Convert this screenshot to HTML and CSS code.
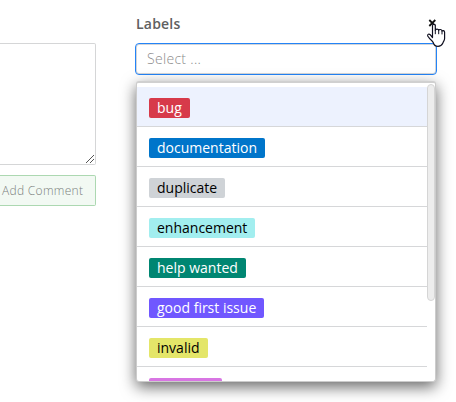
FILE: index.html
```html
<!DOCTYPE html>
<html lang="en">
<head>
<meta charset="utf-8">
<title>Labels</title>
<link rel="stylesheet" href="styles.css">
</head>
<body>
<main class="page">
  <section class="comment">
    <div class="comment-box">
      <svg class="grip" width="8" height="8" viewBox="0 0 8 8" shape-rendering="crispEdges"><path d="M0 7h1v1H0zM1 6h1v1H1zM2 5h1v1H2zM3 4h1v1H3zM4 3h1v1H4zM5 2h1v1H5zM6 1h1v1H6zM7 0h1v1H7zM4 7h1v1H4zM5 6h1v1H5zM6 5h1v1H6zM7 4h1v1H7z" fill="#555"/></svg>
    </div>
    <button class="add">Add Comment</button>
  </section>
  <aside class="labels">
    <header class="head">
      <h2>Labels</h2>
      <svg class="close" width="8" height="8" viewBox="0 0 8 8"><path d="M1.300 1L7.300 7M7.300 1L1.300 7" stroke="#111" stroke-width="1.8"/></svg>
    </header>
    <div class="select">Select ...</div>
    <div class="menu">
      <ul class="list">
        <li class="active"><span class="tag bug">bug</span></li>
        <li><span class="tag documentation">documentation</span></li>
        <li><span class="tag duplicate">duplicate</span></li>
        <li><span class="tag enhancement">enhancement</span></li>
        <li><span class="tag help">help wanted</span></li>
        <li><span class="tag first">good first issue</span></li>
        <li><span class="tag invalid">invalid</span></li>
        <li><span class="tag question">question</span></li>
      </ul>
      <div class="track"><div class="thumb"></div></div>
    </div>
  </aside>
</main>
<svg class="pointer" width="20" height="25" viewBox="0 0 20 25"><path d="M6.500 14.500V2.800C6.500 .8 9.300 .8 9.300 2.800V7.500C9.300 5.800 12.700 5.600 12.700 7.400C13 6 16 6.200 16 8.200C16.500 7 18.600 7.500 18.600 9.300V15.500C18.600 17.800 17 18.500 16.800 20.300C15.800 22.400 14.200 23.300 12 23.300C9.200 23.300 7.700 21.400 7.200 19.500C6.300 17.300 4.600 17 3.500 15.300L1.700 13C1.200 11.200 3 10.700 4.200 11.700Z" fill="#fff" stroke="#101020" stroke-width="1.2" stroke-linejoin="round"/><path d="M9.300 7.500v3.700M12.700 7.400v3.800M16 8.200v3.200" stroke="#101020"/></svg>
</body>
</html>
```
FILE: styles.css
```css
* { box-sizing: border-box; }
body {
  margin: 0;
  background: #fff;
  font: 14px/20px "Open Sans", sans-serif;
  overflow: hidden;
}
.page {
  display: grid;
  grid-template-columns: 96px 302px;
  column-gap: 39px;
  height: 402px;
}
.comment { padding-top: 43px; }
.comment-box {
  display: flex;
  align-items: flex-end;
  justify-content: flex-end;
  height: 122px;
  padding: 1px;
  border: 1px solid #d5d6d7;
  border-left: 0;
  border-radius: 0 2px 2px 0;
}
.add {
  display: block;
  width: 96px;
  height: 31px;
  margin-top: 10px;
  padding: 0 0 0 2px;
  border: 1px solid #acd8b1;
  border-left: 0;
  border-radius: 0 2px 2px 0;
  background: #f2f9f3;
  color: #7c817e;
  font: 300 12px/20px "Open Sans", sans-serif;
  letter-spacing: .3px;
  text-align: left;
  white-space: nowrap;
}
.labels { padding-top: 14px; }
.head {
  display: flex;
  justify-content: space-between;
  height: 29px;
  padding-left: 1px;
}
h2 {
  margin: 0;
  color: #606060;
  font-size: 14px;
  font-weight: 600;
  letter-spacing: .2px;
  line-height: 20px;
}
.close { margin: 5px 1px 0 0; }
.select {
  height: 32px;
  padding: 5px 11px;
  border: 1px solid #2484f7;
  border-radius: 4px;
  box-shadow: inset 0 0 0 1px #d3d5d8;
  color: #8c8c8c;
  font-weight: 300;
  letter-spacing: .3px;
}
.menu {
  display: flex;
  height: 301px;
  margin: 6px 1px 0;
  padding-top: 1px;
  overflow: hidden;
  border: 1px solid #ccc;
  border-top: 2px solid #d0d0d0;
  border-radius: 3px;
  background: #fff;
  box-shadow: 0 5px 15px rgba(0, 0, 0, .6);
}
.list {
  width: 290px;
  margin: 0;
  padding: 3px 0 0;
  list-style: none;
}
.list li {
  height: 40px;
  padding: 11px 12px 0;
  border-bottom: 1px solid #d6d7d9;
}
.list .active { background: #edf2fe; }
.tag {
  display: block;
  width: max-content;
  height: 20px;
  padding: 0 8px;
  border-radius: 2px;
  color: #fff;
}
.bug { background: #d73a4a; }
.documentation { background: #0075ca; }
.duplicate { background: #cfd3d7; color: #000; }
.enhancement { background: #a2eeef; color: #000; }
.help { background: #008672; }
.first { background: #7057ff; }
.invalid { background: #e4e669; color: #000; }
.question { background: #d876e3; }
.track { width: 8px; }
.thumb {
  height: 217px;
  border: 1px solid #d5d5d5;
  border-radius: 4px;
  background: #ededed;
}
.pointer {
  position: absolute;
  left: 426px;
  top: 23px;
}
```
